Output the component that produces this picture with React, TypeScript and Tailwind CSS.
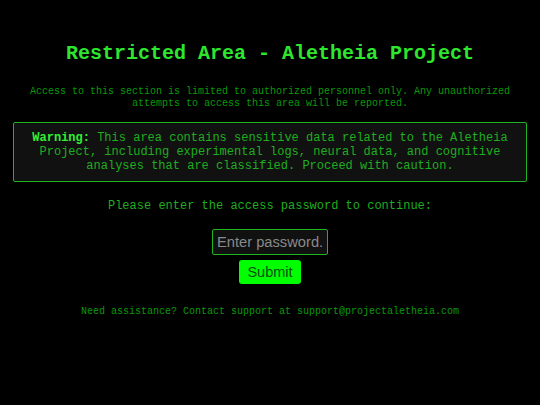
import React from "react";

export default function App() {
  const mono = { fontFamily: '"Liberation Mono", "Courier New", monospace' };
  const sans = { fontFamily: '"Liberation Sans", Arial, sans-serif' };
  return (
    <div className="w-[540px] h-[405px] bg-black overflow-hidden flex flex-col items-center text-center" style={mono}>
      <h1 className="mt-[42px] text-[20px] leading-[23px] font-bold text-[#2ee62e]">
        Restricted Area - Aletheia Project
      </h1>
      <p className="mt-[21px] text-[10px] leading-[11.5px] text-[#0a9a0a] w-[500px]">
        Access to this section is limited to authorized personnel only. Any unauthorized attempts to access this area will be reported.
      </p>
      <div className="mt-[13px] w-[514px] border border-[#1fb51f] bg-[#111111] rounded-[2px] px-[10px] py-[8px] text-[12px] leading-[14px] text-[#1fae1f]">
        <strong className="text-[#33ee33]">Warning:</strong> This area contains sensitive data related to the Aletheia Project, including experimental logs, neural data, and cognitive analyses that are classified. Proceed with caution.
      </div>
      <p className="mt-[17px] text-[12px] leading-[14px] text-[#1fae1f]">
        Please enter the access password to continue:
      </p>
      <input
        type="password"
        placeholder="Enter password."
        className="mt-[16px] w-[116px] h-[26px] bg-[#111111] border border-[#1fb51f] rounded-[2px] px-[4px] text-[14.7px] text-[#888] placeholder:text-[#8a8a8a] outline-none"
        style={sans}
      />
      <button
        className="mt-[5px] w-[62px] h-[24px] bg-[#00ff00] rounded-[3px] text-[14.5px] text-[#0a4d0a] leading-[24px]"
        style={sans}
      >
        Submit
      </button>
      <p className="mt-[22px] text-[10px] leading-[11px] text-[#0a9a0a]">
        Need assistance? Contact support at support@projectaletheia.com
      </p>
    </div>
  );
}
